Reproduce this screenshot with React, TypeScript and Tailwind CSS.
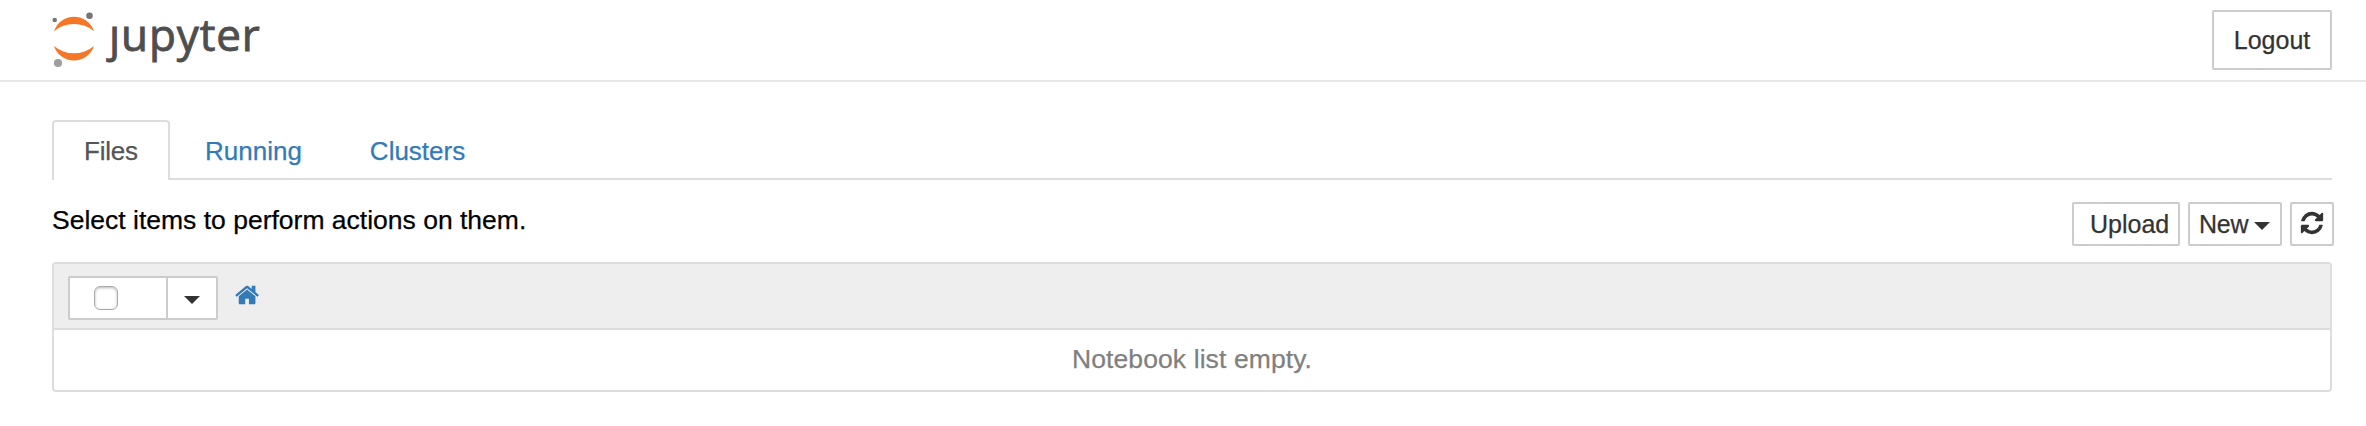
import React from 'react';

const HOME =
  'M1408 992v480q0 26-19 45t-45 19h-384v-384h-256v384h-384q-26 0-45-19t-19-45v-480q0-1 .5-3t.5-3l575-474 575 474q1 2 1 6zm223-69l-62 74q-8 9-21 11h-3q-13 0-21-7l-692-577-692 577q-12 8-24 7-13-2-21-11l-62-74q-8-10-7-23.5t11-21.5l719-599q32-26 76-26t76 26l244 204v-195q0-14 9-23t23-9h192q14 0 23 9t9 23v408l219 182q10 8 11 21.5t-7 23.5z';
const REFRESH =
  'M1639 1056q0 5-1 7-64 268-268 434.5t-478 166.5q-146 0-282.5-55t-243.5-157l-129 129q-19 19-45 19t-45-19-19-45v-448q0-26 19-45t45-19h448q26 0 45 19t19 45-19 45l-137 137q71 66 161 102t187 36q134 0 250-65t186-179q11-17 53-117 8-23 30-23h192q13 0 22.5 9.5t9.5 22.5zm25-800v448q0 26-19 45t-45 19h-448q-26 0-45-19t-19-45 19-45l138-138q-148-137-349-137-134 0-250 65t-186 179q-11 17-53 117-8 23-30 23h-199q-13 0-22.5-9.5t-9.5-22.5v-7q65-268 270-434.5t480-166.5q146 0 284 55.5t245 156.5l130-129q19-19 45-19t45 19 19 45z';

function Icon({ d, className }: { d: string; className: string }) {
  return (
    <svg viewBox="0 0 1792 1792" fill="currentColor" className={`h-[26px] w-[26px] shrink-0 ${className}`}>
      <path d={d} />
    </svg>
  );
}

function Caret({ className }: { className: string }) {
  return (
    <svg viewBox="0 0 16 8" fill="#333" className={`h-2 w-4 shrink-0 ${className}`}>
      <path d="M0 0h16L8 8z" />
    </svg>
  );
}

function Logo() {
  return (
    <a className="flex h-[80px] text-[#4e4e4e]">
      <svg viewBox="0 0 44 60" className="mt-[10px] h-[60px] w-[44px] shrink-0">
        <path d="M2 21.300A21 21 0 0 1 42 21.300A31 31 0 0 0 2 21.300z" fill="#f37726" />
        <path d="M2 36A21 21 0 0 0 42 36A31 31 0 0 1 2 36z" fill="#f37726" />
        <circle cx="2.700" cy="10" r="2.300" fill="#767677" />
        <circle cx="37.500" cy="5.700" r="3.300" fill="#767677" />
        <circle cx="6" cy="53" r="4.100" fill="#9e9e9e" />
      </svg>
      <span className="ml-[13px] mt-[4px] flex font-['Open_Sans','Noto_Sans',sans-serif] text-[44px] leading-[60px] tracking-[0.9px] [-webkit-text-stroke:0.9px_#4e4e4e]">
        <span className="[clip-path:inset(22px_-2px_-10px_-10px)]">j</span>
        <span>upyter</span>
      </span>
    </a>
  );
}

const button = 'flex shrink-0 border-2 border-[#ccc] rounded-[2px] bg-white text-[25px] leading-[36px] text-[#333]';

export default function App() {
  return (
    <div className="min-h-[426px] bg-white font-['Liberation_Sans',Arial,sans-serif] text-[26px] leading-[36px] text-black [-webkit-text-stroke:0.25px_currentColor]">
      <header className="flex h-[82px] items-start justify-between border-b-2 border-[#e7e7e7] pl-[52px] pr-[34px]">
        <Logo />
        <button className={`${button} mt-[10px] h-[60px] w-[120px] justify-center pt-[10px]`}>Logout</button>
      </header>
      <main className="pl-[52px] pr-[34px] pt-[38px]">
        <nav className="flex h-[60px] border-b-2 border-[#ddd] text-[#337ab7]">
          <a className="mr-1 h-[60px] w-[118px] rounded-t-[4px] border-2 border-b-0 border-[#ddd] bg-white pl-[30px] pt-[11px] tracking-[-0.2px] text-[#555]">Files</a>
          <a className="mr-1 pl-[31px] pr-8 pt-[13px]">Running</a>
          <a className="px-8 pt-[13px]">Clusters</a>
        </nav>
        <div className="-mr-[2px] flex h-[82px] justify-between">
          <p className="pt-[22px] text-[26.5px]">Select items to perform actions on them.</p>
          <div className="flex gap-2 pt-[22px]">
            <button className={`${button} h-[44px] w-[108px] pl-4 pt-[2px]`}>Upload</button>
            <button className={`${button} h-[44px] w-[94px] pl-[9px] pt-[2px]`}>
              <span className="w-[55px] text-left tracking-[-0.2px]">New</span>
              <Caret className="mt-[16px]" />
            </button>
            <button className={`${button} h-[44px] w-[44px] pl-[7px] pt-[6px]`} aria-label="Refresh">
              <Icon d={REFRESH} className="" />
            </button>
          </div>
        </div>
        <section className="h-[130px] overflow-hidden rounded-[4px] border-2 border-[#ddd]">
          <div className="flex h-[66px] border-b-2 border-[#ddd] bg-[#eee] pl-[14px] pt-3">
            <div className={`${button} h-[44px] w-[150px]`}>
              <div className="w-[98px] border-r-2 border-[#ccc] pl-6 pt-2">
                <div className="h-6 w-6 rounded-[6px] border border-[#aaa] bg-white shadow-[inset_0_1px_3px_rgba(0,0,0,0.28)]" />
              </div>
              <Caret className="ml-4 mt-[18px]" />
            </div>
            <Icon d={HOME} className="ml-[17px] mt-[6px] text-[#337ab7]" />
          </div>
          <p className="pt-[11px] text-center text-[26.5px] tracking-[0.1px] text-[#808080]">Notebook list empty.</p>
        </section>
      </main>
    </div>
  );
}
